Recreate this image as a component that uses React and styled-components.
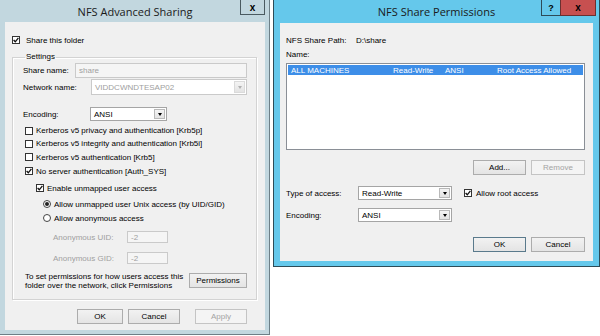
import React from 'react';
import styled, { createGlobalStyle } from 'styled-components';

const GlobalStyle = createGlobalStyle`
  html, body {
    margin: 0;
    padding: 0;
    background: #ffffff;
  }
  body {
    width: 600px;
    height: 336px;
    overflow: hidden;
    font-family: "Liberation Sans", Arial, sans-serif;
    font-size: 8px;
    color: #000;
  }
  * { box-sizing: border-box; }
`;

const Desktop = styled.div`
  display: flex;
  align-items: flex-start;
  gap: 3px;
  width: 600px;
  height: 336px;
  background: #ffffff;
`;

const Window = styled.div`
  flex-shrink: 0;
  display: flex;
  flex-direction: column;
  width: ${p => p.$w}px;
  height: ${p => p.$h}px;
  background: ${p => (p.$active ? '#65c8eb' : '#c2d7df')};
  border: 1px solid ${p => (p.$active ? '#2d4b57' : '#6d7f87')};
  border-top: 0;
  border-left-width: ${p => (p.$cropLeft ? 0 : 1)}px;
  padding: 0 ${p => p.$fr}px ${p => p.$fb}px ${p => p.$fl}px;
`;

const TitleBar = styled.div`
  display: grid;
  grid-template-columns: 1fr auto 1fr;
  align-items: start;
  height: ${p => p.$h}px;
  flex-shrink: 0;
`;

const Title = styled.div`
  grid-column: 2;
  font-family: "Open Sans", "Liberation Sans", sans-serif;
  font-size: 11px;
  line-height: 24px;
  color: #1a1a1a;
  white-space: nowrap;
`;

const CaptionButtons = styled.div`
  grid-column: 3;
  justify-self: end;
  display: flex;
  margin-right: ${p => p.$mr || 0}px;
`;

const CaptionButton = styled.div`
  display: flex;
  align-items: center;
  justify-content: center;
  width: ${p => p.$w}px;
  height: ${p => p.$h}px;
  border: 1px solid ${p => p.$border};
  border-top: 0;
  margin-left: -1px;
  background: ${p => p.$bg};
  font-family: "Liberation Sans", Arial, sans-serif;
  font-weight: bold;
  font-size: ${p => p.$fs || 10}px;
  color: #000;
`;

const Client = styled.div`
  flex: 1;
  display: flex;
  flex-direction: column;
  background: #f0f0f0;
  padding: ${p => p.$pad};
`;

const Row = styled.div`
  display: flex;
  align-items: center;
  height: ${p => p.$h}px;
  margin-top: ${p => p.$mt || 0}px;
  padding-left: ${p => p.$indent || 0}px;
  padding-right: ${p => p.$pr || 0}px;
  justify-content: ${p => p.$justify || 'flex-start'};
  white-space: nowrap;
  flex-shrink: 0;
`;

const Label = styled.span`
  width: ${p => (p.$w ? `${p.$w}px` : 'auto')};
  flex-shrink: 0;
  color: ${p => (p.$disabled ? '#a0a0a0' : '#000')};
`;

const GroupBox = styled.fieldset`
  width: 245px;
  margin: 6px 0 0 0;
  padding: 0 9px 10px 10px;
  border: 1px solid #d3d3d3;
  border-radius: 0;
  box-shadow: inset 1px 1px 0 #ffffff, 1px 1px 0 #ffffff;
  min-inline-size: 0;
`;

const Legend = styled.legend`
  padding: 0 1px;
  margin-left: 2px;
  line-height: 10px;
  font-size: 8px;
`;

const TextBox = styled.div`
  display: flex;
  align-items: center;
  width: ${p => p.$w}px;
  height: ${p => p.$h}px;
  padding-left: 3px;
  border: 1px solid ${p => (p.$disabled ? '#cacaca' : '#abadb3')};
  background: ${p => (p.$disabled ? '#f5f5f5' : '#ffffff')};
  color: ${p => (p.$disabled ? '#a0a0a0' : '#000')};
`;

const Combo = styled.div`
  display: flex;
  align-items: stretch;
  width: ${p => p.$w}px;
  height: ${p => p.$h}px;
  border: 1px solid ${p => (p.$disabled ? '#cacaca' : '#a5a5a5')};
  background: #ffffff;
  color: ${p => (p.$disabled ? '#a0a0a0' : '#000')};
`;

const ComboText = styled.span`
  flex: 1;
  display: flex;
  align-items: center;
  padding-left: 3px;
`;

const DropButton = styled.span`
  display: flex;
  align-items: center;
  justify-content: center;
  width: 11px;
  margin: 1px;
  border: 1px solid ${p => (p.$disabled ? '#dadada' : '#b9b9b9')};
  background: linear-gradient(#f4f4f4, #e3e3e3);

  &::after {
    content: '';
    border-left: 2.5px solid transparent;
    border-right: 2.5px solid transparent;
    border-top: 3px solid ${p => (p.$disabled ? '#b0b0b0' : '#000')};
  }
`;

const Box = styled.span`
  display: flex;
  align-items: center;
  justify-content: center;
  width: 8px;
  height: 8px;
  flex-shrink: 0;
  margin-right: ${p => p.$gap}px;
  border: 1px solid #333333;
  background: #ffffff;
`;

const RadioDot = styled.span`
  display: flex;
  align-items: center;
  justify-content: center;
  width: 8px;
  height: 8px;
  flex-shrink: 0;
  margin-right: ${p => p.$gap}px;
  border: 1px solid #444444;
  border-radius: 50%;
  background: #ffffff;

  &::after {
    content: '';
    display: ${p => (p.$on ? 'block' : 'none')};
    width: 4px;
    height: 4px;
    border-radius: 50%;
    background: #222222;
  }
`;

const Button = styled.div`
  display: flex;
  align-items: center;
  justify-content: center;
  width: ${p => p.$w}px;
  height: 15px;
  margin-left: ${p => p.$ml || 0}px;
  border: 1px solid ${p => (p.$disabled ? '#c4c4c4' : p.$default ? '#5a7a8c' : '#acacac')};
  background: ${p => (p.$disabled ? '#f4f4f4' : 'linear-gradient(#f2f2f2, #e4e4e4)')};
  color: ${p => (p.$disabled ? '#a3a3a3' : '#000')};
  flex-shrink: 0;
`;

const HelpText = styled.div`
  line-height: 9px;
`;

const ListView = styled.div`
  width: 299px;
  height: 87px;
  margin-top: 3px;
  border: 1px solid #8a8f96;
  background: #ffffff;
  padding: 1px;
  flex-shrink: 0;
`;

const ListRow = styled.div`
  display: flex;
  align-items: center;
  height: 10px;
  padding-left: 3px;
  background: ${p => (p.$selected ? '#3d8ee8' : 'transparent')};
  color: ${p => (p.$selected ? '#ffffff' : '#000')};
  white-space: nowrap;
`;

const ListCell = styled.span`
  width: ${p => (p.$w ? `${p.$w}px` : 'auto')};
  flex-shrink: 0;
`;

const Check = ({ on, gap = 3 }) => (
  <Box $gap={gap}>
    {on && (
      <svg width="6" height="6" viewBox="0 0 6 6">
        <path d="M0.6 3 L2.3 4.8 L5.4 0.8" fill="none" stroke="#111" strokeWidth="1.3" />
      </svg>
    )}
  </Box>
);

const Dropdown = ({ w, h, value, disabled }) => (
  <Combo $w={w} $h={h} $disabled={disabled}>
    <ComboText>{value}</ComboText>
    <DropButton $disabled={disabled} />
  </Combo>
);

const AdvancedSharing = () => (
  <Window $w={270} $h={335} $fl={5} $fr={4} $fb={4} $cropLeft>
    <TitleBar $h={22}>
      <Title>NFS Advanced Sharing</Title>
      <CaptionButtons>
        <CaptionButton $w={25} $h={15} $border="#4a5a60" $bg="#c2d7df">x</CaptionButton>
      </CaptionButtons>
    </TitleBar>
    <Client $pad="12px 0 0 7px">
      <Row $h={12}>
        <Check on gap={6} />
        Share this folder
      </Row>
      <GroupBox>
        <Legend>Settings</Legend>
        <Row $h={16}>
          <Label $w={52}>Share name:</Label>
          <TextBox $w={173} $h={15} $disabled>share</TextBox>
        </Row>
        <Row $h={16} $mt={1}>
          <Label $w={68}>Network name:</Label>
          <Dropdown w={156} h={16} value="VIDDCWNDTESAP02" disabled />
        </Row>
        <Row $h={16} $mt={11}>
          <Label $w={67}>Encoding:</Label>
          <Dropdown w={77} h={14} value="ANSI" />
        </Row>
        <Row $h={13} $mt={2} $indent={2}>
          <Check />
          Kerberos v5 privacy and authentication [Krb5p]
        </Row>
        <Row $h={13} $indent={2}>
          <Check />
          Kerberos v5 integrity and authentication [Krb5i]
        </Row>
        <Row $h={14} $indent={2}>
          <Check />
          Kerberos v5 authentication [Krb5]
        </Row>
        <Row $h={14} $indent={2}>
          <Check on />
          No server authentication [Auth_SYS]
        </Row>
        <Row $h={14} $mt={3} $indent={13}>
          <Check on />
          Enable unmapped user access
        </Row>
        <Row $h={14} $mt={2} $indent={20}>
          <RadioDot $on $gap={3} />
          Allow unmapped user Unix access (by UID/GID)
        </Row>
        <Row $h={14} $indent={20}>
          <RadioDot $gap={3} />
          Allow anonymous access
        </Row>
        <Row $h={12} $mt={6} $indent={30}>
          <Label $w={74} $disabled>Anonymous UID:</Label>
          <TextBox $w={41} $h={12} $disabled>-2</TextBox>
        </Row>
        <Row $h={12} $mt={9} $indent={30}>
          <Label $w={74} $disabled>Anonymous GID:</Label>
          <TextBox $w={41} $h={12} $disabled>-2</TextBox>
        </Row>
        <Row $h={17} $mt={8} $indent={2} $justify="space-between">
          <HelpText>
            To set permissions for how users access this
            <br />
            folder over the network, click Permissions
          </HelpText>
          <Button $w={58}>Permissions</Button>
        </Row>
      </GroupBox>
      <Row $h={15} $mt={9} $pr={18} $justify="flex-end">
        <Button $w={46}>OK</Button>
        <Button $w={52} $ml={5}>Cancel</Button>
        <Button $w={52} $ml={15} $disabled>Apply</Button>
      </Row>
    </Client>
  </Window>
);

const SharePermissions = () => (
  <Window $w={327} $h={267} $fl={6} $fr={6} $fb={5} $active>
    <TitleBar $h={23}>
      <Title>NFS Share Permissions</Title>
      <CaptionButtons $mr={-3}>
        <CaptionButton $w={20} $h={16} $border="#2d4b57" $bg="#65c8eb" $fs={9}>?</CaptionButton>
        <CaptionButton $w={36} $h={16} $border="#6a3030" $bg="#c75050">x</CaptionButton>
      </CaptionButtons>
    </TitleBar>
    <Client $pad="11px 8px 0 6px">
      <Row $h={12}>
        <Label $w={70}>NFS Share Path:</Label>
        D:\share
      </Row>
      <Row $h={12} $mt={2}>
        <Label>Name:</Label>
      </Row>
      <ListView>
        <ListRow $selected>
          <ListCell $w={102}>ALL MACHINES</ListCell>
          <ListCell $w={52}>Read-Write</ListCell>
          <ListCell $w={52}>ANSI</ListCell>
          <ListCell>Root Access Allowed</ListCell>
        </ListRow>
      </ListView>
      <Row $h={15} $mt={10} $justify="flex-end">
        <Button $w={53}>Add...</Button>
        <Button $w={54} $ml={5} $disabled>Remove</Button>
      </Row>
      <Row $h={14} $mt={11}>
        <Label $w={72}>Type of access:</Label>
        <Dropdown w={94} h={14} value="Read-Write" />
        <Row $h={14} $indent={12}>
          <Check on gap={4} />
          Allow root access
        </Row>
      </Row>
      <Row $h={14} $mt={8}>
        <Label $w={72}>Encoding:</Label>
        <Dropdown w={94} h={14} value="ANSI" />
      </Row>
      <Row $h={15} $mt={15} $justify="flex-end">
        <Button $w={53} $default>OK</Button>
        <Button $w={54} $ml={5}>Cancel</Button>
      </Row>
    </Client>
  </Window>
);

const App = () => (
  <>
    <GlobalStyle />
    <Desktop>
      <AdvancedSharing />
      <SharePermissions />
    </Desktop>
  </>
);

export default App;
